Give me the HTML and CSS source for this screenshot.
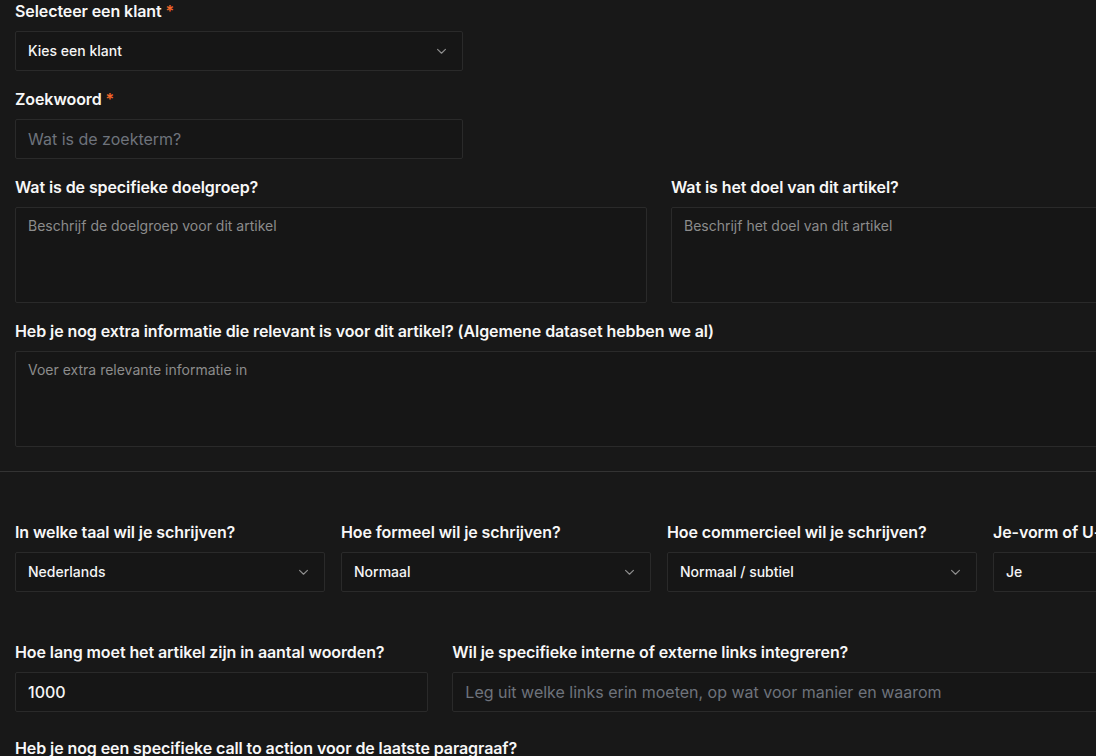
FILE: index.html
```html
<!DOCTYPE html>
<html lang="nl">
<head>
<meta charset="utf-8">
<title>Artikel</title>
<link rel="stylesheet" href="styles.css">
</head>
<body>
<form class="form">
  <div class="field narrow">
    <label class="label">Selecteer een klant <span class="req">*</span></label>
    <div class="select"><span>Kies een klant</span><svg class="chev" viewBox="0 0 12 8" width="12" height="8"><path d="M1.5 1.5 6 6l4.5-4.5" fill="none" stroke="currentColor" stroke-width="1.3" stroke-linecap="round" stroke-linejoin="round"/></svg></div>
  </div>
  <div class="field narrow">
    <label class="label">Zoekwoord <span class="req">*</span></label>
    <div class="input placeholder">Wat is de zoekterm?</div>
  </div>
  <div class="grid2">
    <div class="field">
      <label class="label">Wat is de specifieke doelgroep?</label>
      <div class="textarea">Beschrijf de doelgroep voor dit artikel</div>
    </div>
    <div class="field">
      <label class="label">Wat is het doel van dit artikel?</label>
      <div class="textarea">Beschrijf het doel van dit artikel</div>
    </div>
  </div>
  <div class="field">
    <label class="label">Heb je nog extra informatie die relevant is voor dit artikel? (Algemene dataset hebben we al)</label>
    <div class="textarea">Voer extra relevante informatie in</div>
  </div>

  <hr class="divider">

  <div class="grid4">
    <div class="field">
      <label class="label">In welke taal wil je schrijven?</label>
      <div class="select"><span>Nederlands</span><svg class="chev" viewBox="0 0 12 8" width="12" height="8"><path d="M1.5 1.5 6 6l4.5-4.5" fill="none" stroke="currentColor" stroke-width="1.3" stroke-linecap="round" stroke-linejoin="round"/></svg></div>
    </div>
    <div class="field">
      <label class="label">Hoe formeel wil je schrijven?</label>
      <div class="select"><span>Normaal</span><svg class="chev" viewBox="0 0 12 8" width="12" height="8"><path d="M1.5 1.5 6 6l4.5-4.5" fill="none" stroke="currentColor" stroke-width="1.3" stroke-linecap="round" stroke-linejoin="round"/></svg></div>
    </div>
    <div class="field">
      <label class="label">Hoe commercieel wil je schrijven?</label>
      <div class="select"><span>Normaal / subtiel</span><svg class="chev" viewBox="0 0 12 8" width="12" height="8"><path d="M1.5 1.5 6 6l4.5-4.5" fill="none" stroke="currentColor" stroke-width="1.3" stroke-linecap="round" stroke-linejoin="round"/></svg></div>
    </div>
    <div class="field">
      <label class="label">Je-vorm of U-vorm?</label>
      <div class="select"><span>Je</span><svg class="chev" viewBox="0 0 12 8" width="12" height="8"><path d="M1.5 1.5 6 6l4.5-4.5" fill="none" stroke="currentColor" stroke-width="1.3" stroke-linecap="round" stroke-linejoin="round"/></svg></div>
    </div>
  </div>

  <div class="grid3">
    <div class="field">
      <label class="label">Hoe lang moet het artikel zijn in aantal woorden?</label>
      <div class="input value">1000</div>
    </div>
    <div class="field span2">
      <label class="label">Wil je specifieke interne of externe links integreren?</label>
      <div class="input placeholder">Leg uit welke links erin moeten, op wat voor manier en waarom</div>
    </div>
  </div>

  <div class="field">
    <label class="label">Heb je nog een specifieke call to action voor de laatste paragraaf?</label>
    <div class="textarea">Beschrijf de call to action</div>
  </div>
</form>
</body>
</html>
```

FILE: styles.css
```css
html, body {
  margin: 0;
  padding: 0;
  overflow: hidden;
  background: #181818;
}

body {
  font-family: Inter, "Noto Sans", sans-serif;
  color: #f5f5f5;
}

.form {
  width: 1288px;
  margin: -1px 0 0 15px;
  display: flex;
  flex-direction: column;
  gap: 16px;
}

.field {
  display: flex;
  flex-direction: column;
  gap: 8px;
}

.narrow {
  width: 448px;
}

.label {
  font-size: 16px;
  line-height: 24px;
  font-weight: 600;
  letter-spacing: -0.09px;
  color: #f7f7f7;
  white-space: nowrap;
}

.req {
  color: #f3662a;
}

.select,
.input,
.textarea {
  box-sizing: border-box;
  background: #161616;
  border: 1px solid #2a2a2a;
  border-radius: 2px;
}

.select {
  height: 40px;
  display: flex;
  align-items: center;
  justify-content: space-between;
  padding: 0 15px 0 12px;
  font-size: 14px;
  line-height: 20px;
  font-weight: 500;
  color: #f5f5f5;
}

.chev {
  color: #8f8f8f;
  width: 11px;
  height: 7px;
}

.input {
  height: 40px;
  display: flex;
  align-items: center;
  padding: 0 12px;
  font-size: 16px;
  line-height: 24px;
}

.input.placeholder {
  color: #6e737c;
}

.input.value {
  color: #f5f5f5;
  font-weight: 500;
}

.textarea {
  height: 96px;
  padding: 8px 12px;
  font-size: 14px;
  line-height: 20px;
  color: #8c8c8c;
}

.grid2 {
  display: grid;
  grid-template-columns: 1fr 1fr;
  gap: 24px;
}

.divider {
  border: 0;
  border-top: 1px solid #333333;
  margin: 8px 0 32px -15px;
  width: 1303px;
}

.grid4 {
  display: grid;
  grid-template-columns: repeat(4, 1fr);
  gap: 16px;
  margin-bottom: 32px;
}

.grid3 {
  display: grid;
  grid-template-columns: repeat(3, 1fr);
  gap: 24px;
  margin-bottom: 8px;
}

.span2 {
  grid-column: span 2;
}
```
